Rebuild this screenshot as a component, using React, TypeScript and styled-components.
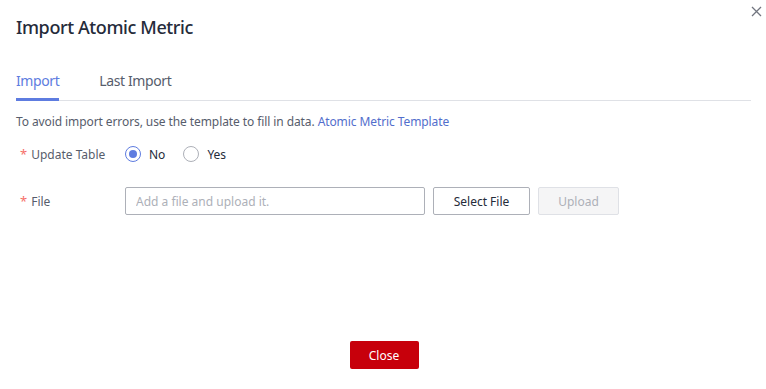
import React from "react";
import styled, { createGlobalStyle } from "styled-components";

const Global = createGlobalStyle`
  html, body { margin: 0; padding: 0; background: #fff; }
  body { font-family: "Noto Sans", "Open Sans", sans-serif; color: #252b3a; }
  * { box-sizing: border-box; }
`;

const Dialog = styled.div`
  position: relative;
  width: 766px;
  height: 389px;
  padding: 0 15px 0 16px;
  display: flex;
  flex-direction: column;
`;

const Title = styled.h2`
  margin: 0;
  padding-top: 13px;
  height: 42px;
  font-size: 18px;
  font-weight: 500;
  letter-spacing: -0.4px;
  line-height: 28px;
  color: #252b3a;
`;

const CloseX = styled.button`
  position: absolute;
  top: 3px;
  right: 2px;
  width: 16px;
  height: 16px;
  padding: 0;
  border: none;
  background: transparent;
  display: flex;
  align-items: center;
  justify-content: center;
  cursor: pointer;
`;

const Tabs = styled.div`
  margin-top: 28px;
  display: flex;
  gap: 40px;
  border-bottom: 1px solid #dfe1e6;
`;

const Tab = styled.div<{ $active?: boolean }>`
  font-size: 14px;
  letter-spacing: -0.4px;
  line-height: 22px;
  padding-bottom: 6px;
  color: ${(p) => (p.$active ? "#5e7ce0" : "#575d6c")};
  border-bottom: 3px solid ${(p) => (p.$active ? "#5e7ce0" : "transparent")};
  margin-bottom: -1px;
`;

const Hint = styled.p`
  margin: 12px 0 0;
  font-size: 12px;
  letter-spacing: -0.09px;
  line-height: 18px;
  color: #575d6c;
`;

const Link = styled.a`
  color: #526ecc;
  text-decoration: none;
`;

const FormRow = styled.div<{ $mt: number }>`
  display: flex;
  align-items: center;
  margin-top: ${(p) => p.$mt}px;
  min-height: 28px;
`;

const Label = styled.label`
  width: 109px;
  padding-left: 4px;
  font-size: 12px;
  color: #575d6c;
  display: flex;
  align-items: center;
  gap: 4px;
`;

const Star = styled.span`
  color: #f66f6a;
  font-size: 13px;
`;

const RadioGroup = styled.div`
  display: flex;
  align-items: center;
  gap: 18px;
`;

const RadioItem = styled.label`
  display: flex;
  align-items: center;
  gap: 8px;
  font-size: 12px;
  color: #252b3a;
`;

const RadioCircle = styled.span<{ $checked?: boolean }>`
  width: 16px;
  height: 16px;
  border-radius: 50%;
  border: 1px solid ${(p) => (p.$checked ? "#5e7ce0" : "#adb0b8")};
  display: flex;
  align-items: center;
  justify-content: center;
  &::after {
    content: "";
    width: 8px;
    height: 8px;
    border-radius: 50%;
    background: ${(p) => (p.$checked ? "#5e7ce0" : "transparent")};
  }
`;

const Input = styled.input`
  width: 300px;
  height: 28px;
  border: 1px solid #adb0b8;
  border-radius: 2px;
  padding: 0 10px;
  font-family: inherit;
  font-size: 12px;
  color: #252b3a;
  outline: none;
  &::placeholder { color: #adb0b8; }
`;

const Button = styled.button<{ $w: number; $disabled?: boolean }>`
  height: 28px;
  width: ${(p) => p.$w}px;
  margin-left: 8px;
  border-radius: 2px;
  font-family: inherit;
  font-size: 12px;
  border: 1px solid ${(p) => (p.$disabled ? "#dfe1e6" : "#adb0b8")};
  background: ${(p) => (p.$disabled ? "#f5f5f6" : "#fff")};
  color: ${(p) => (p.$disabled ? "#adb0b8" : "#252b3a")};
`;

const Footer = styled.div`
  margin-top: auto;
  padding-bottom: 20px;
  display: flex;
  justify-content: center;
`;

const PrimaryButton = styled.button`
  width: 69px;
  height: 28px;
  border: none;
  border-radius: 2px;
  background: #c7000b;
  color: #fff;
  font-family: inherit;
  font-size: 12px;
  margin-left: 1px;
`;

export default function App() {
  return (
    <>
      <Global />
      <Dialog>
        <Title>Import Atomic Metric</Title>
        <CloseX aria-label="close">
          <svg width="11" height="11" viewBox="0 0 11 11">
            <path d="M1 1L10 10M10 1L1 10" stroke="#71757f" strokeWidth="1.3" />
          </svg>
        </CloseX>
        <Tabs>
          <Tab $active>Import</Tab>
          <Tab>Last Import</Tab>
        </Tabs>
        <Hint>
          To avoid import errors, use the template to fill in data.{" "}
          <Link href="#">Atomic Metric Template</Link>
        </Hint>
        <FormRow $mt={9}>
          <Label>
            <Star>*</Star>Update Table
          </Label>
          <RadioGroup>
            <RadioItem>
              <RadioCircle $checked />
              No
            </RadioItem>
            <RadioItem>
              <RadioCircle />
              Yes
            </RadioItem>
          </RadioGroup>
        </FormRow>
        <FormRow $mt={19}>
          <Label>
            <Star>*</Star>File
          </Label>
          <Input placeholder="Add a file and upload it." readOnly />
          <Button $w={97}>Select File</Button>
          <Button $w={81} $disabled>Upload</Button>
        </FormRow>
        <Footer>
          <PrimaryButton>Close</PrimaryButton>
        </Footer>
      </Dialog>
    </>
  );
}
